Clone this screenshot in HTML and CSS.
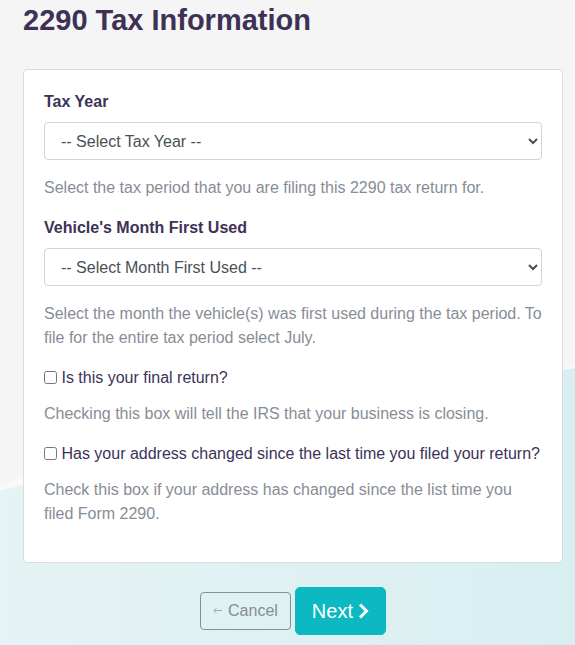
FILE: index.html
```html
<!DOCTYPE html>
<html lang="en">
<head>
<meta charset="utf-8">
<title>2290 Tax Information</title>
<link rel="stylesheet" href="styles.css">
</head>
<body>
<svg class="bg-wave" width="575" height="645" viewBox="0 0 575 645" preserveAspectRatio="none" aria-hidden="true">
  <defs>
    <linearGradient id="wg" x1="0" y1="0" x2="1" y2="0">
      <stop offset="0" stop-color="#e5f3f4"/>
      <stop offset="1" stop-color="#d8eff1"/>
    </linearGradient>
  </defs>
  <path d="M0,484 C40,472 60,472 100,460 C260,417 420,384 575,366 L575,645 L0,645 Z" fill="#f9f9f9"/>
  <path d="M0,491 C40,479 60,479 100,467 C260,424 420,389 575,368 L575,645 L0,645 Z" fill="url(#wg)"/>
</svg>
<main class="page">
  <h1 class="title">2290 Tax Information</h1>
  <section class="card">
    <div class="group">
      <label class="label" for="taxYear">Tax Year</label>
      <select class="select" id="taxYear">
        <option>-- Select Tax Year --</option>
      </select>
      <p class="help help-select">Select the tax period that you are filing this 2290 tax return for.</p>
    </div>
    <div class="group">
      <label class="label" for="month">Vehicle's Month First Used</label>
      <select class="select" id="month">
        <option>-- Select Month First Used --</option>
      </select>
      <p class="help help-select">Select the month the vehicle(s) was first used during the tax period. To file for the entire tax period select July.</p>
    </div>
    <div class="group">
      <label class="check"><input type="checkbox" class="checkbox"> Is this your final return?</label>
      <p class="help">Checking this box will tell the IRS that your business is closing.</p>
    </div>
    <div class="group">
      <label class="check"><input type="checkbox" class="checkbox"> Has your address changed since the last time you filed your return?</label>
      <p class="help">Check this box if your address has changed since the list time you filed Form 2290.</p>
    </div>
  </section>
  <div class="actions">
    <button class="btn btn-cancel" type="button"><svg class="arrow" width="9" height="7" viewBox="0 0 9 7" aria-hidden="true"><path d="M9,3.5 H1 M3.5,1 L1,3.5 L3.5,6" fill="none" stroke="#a3a9b0" stroke-width="1"/></svg>Cancel</button>
    <button class="btn btn-next" type="button">Next <svg class="chev" width="11" height="16" viewBox="0 0 11 16" aria-hidden="true"><polyline points="2,1.5 8.5,8 2,14.5" fill="none" stroke="#fff" stroke-width="3" stroke-linejoin="miter"/></svg></button>
  </div>
</main>
</body>
</html>
```
FILE: styles.css
```css
html, body {
  margin: 0;
  padding: 0;
}
body {
  background: #f5f5f5;
  font-family: "Liberation Sans", Arial, sans-serif;
  font-size: 16px;
  line-height: 1.5;
  color: #3d3256;
  position: relative;
  min-height: 645px;
  overflow: hidden;
}
.bg-wave {
  position: absolute;
  left: 0;
  top: 0;
  z-index: 0;
}
.page {
  position: relative;
  z-index: 1;
  width: 540px;
  margin-left: 23px;
  padding-top: 3px;
}
.title {
  margin: 0 0 32px 0;
  font-size: 29px;
  line-height: 34px;
  font-weight: 700;
  color: #3d3256;
}
.card {
  background: #fff;
  border: 1px solid #dcdcdc;
  border-radius: 4px;
  padding: 20px 20px 20px 20px;
}
.group {
  margin-bottom: 16px;
}
.label {
  display: block;
  font-weight: 700;
  margin-bottom: 8px;
  color: #3d3256;
}
.select {
  display: block;
  width: 100%;
  height: 38px;
  padding: 6px 12px;
  font-family: "Liberation Sans", Arial, sans-serif;
  font-size: 16px;
  color: #495057;
  background-color: #fff;
  border: 1px solid #ced4da;
  border-radius: 4px;
}
.help {
  margin: 12px 0 0 0;
  color: #878d96;
}
.help-select {
  margin-top: 16px;
}
.check {
  display: block;
  color: #3d3256;
}
.checkbox {
  margin: 0;
  width: 13px;
  height: 13px;
  vertical-align: -1px;
}
.actions {
  display: flex;
  justify-content: center;
  align-items: center;
  gap: 4px;
  margin-top: 24px;
}
.btn {
  font-family: "Liberation Sans", Arial, sans-serif;
  cursor: pointer;
  line-height: 1.5;
}
.btn-cancel {
  height: 38px;
  padding: 6px 12px 6px 12px;
  font-size: 16px;
  color: #868e96;
  background: transparent;
  border: 1px solid #868e96;
  border-radius: 4px;
  display: flex;
  align-items: center;
  gap: 6px;
}
.arrow {
  display: block;
  margin-top: -1px;
}
.btn-next {
  height: 48px;
  padding: 8px 16px;
  font-size: 20px;
  color: #fff;
  background: #0cb9c1;
  border: 1px solid #0cb9c1;
  border-radius: 5px;
  display: flex;
  align-items: center;
  gap: 5px;
}
.chev {
  display: block;
}
```
